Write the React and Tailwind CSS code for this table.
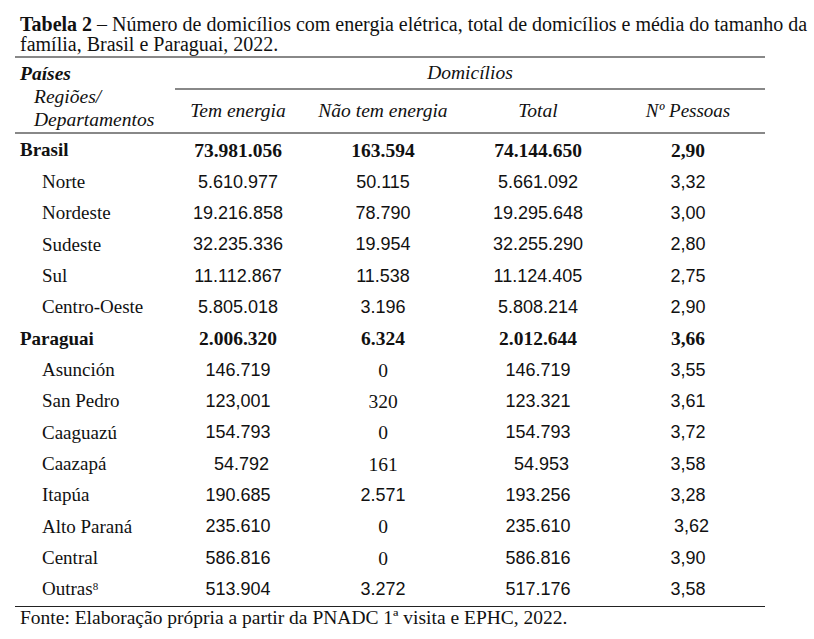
import React from 'react';

const serif = "font-['Liberation_Serif',serif]";
const sans = "font-['Liberation_Sans',Arial,sans-serif]";

// serifCols: cells set in serif; nudge: cells shifted a little right
const rows = [
  { name: 'Brasil', bold: true, cells: ['73.981.056', '163.594', '74.144.650', '2,90'] },
  { name: 'Norte', cells: ['5.610.977', '50.115', '5.661.092', '3,32'] },
  { name: 'Nordeste', cells: ['19.216.858', '78.790', '19.295.648', '3,00'] },
  { name: 'Sudeste', cells: ['32.235.336', '19.954', '32.255.290', '2,80'] },
  { name: 'Sul', cells: ['11.112.867', '11.538', '11.124.405', '2,75'] },
  { name: 'Centro-Oeste', cells: ['5.805.018', '3.196', '5.808.214', '2,90'] },
  { name: 'Paraguai', bold: true, cells: ['2.006.320', '6.324', '2.012.644', '3,66'] },
  { name: 'Asunción', cells: ['146.719', '0', '146.719', '3,55'], serifCols: [1] },
  { name: 'San Pedro', cells: ['123,001', '320', '123.321', '3,61'], serifCols: [1] },
  { name: 'Caaguazú', cells: ['154.793', '0', '154.793', '3,72'], serifCols: [1] },
  { name: 'Caazapá', cells: ['54.792', '161', '54.953', '3,58'], serifCols: [1], nudge: [0, 2] },
  { name: 'Itapúa', cells: ['190.685', '2.571', '193.256', '3,28'] },
  { name: 'Alto Paraná', cells: ['235.610', '0', '235.610', '3,62'], serifCols: [1], nudge: [3] },
  { name: 'Central', cells: ['586.816', '0', '586.816', '3,90'], serifCols: [1] },
  { name: 'Outras', sup: '8', cells: ['513.904', '3.272', '517.176', '3,58'] },
];

const colW = ['w-[126px]', 'w-[164px]', 'w-[146px]', 'w-[154px]'];

function Row({ row }) {
  return (
    <div className="flex h-[31.36px] items-center">
      <div
        className={`w-[160px] ${serif} text-[19px] ${row.bold ? 'font-bold pl-[5px]' : 'pl-[27px]'}`}
      >
        {row.name}
        {row.sup && <sup className="text-[11px]">{row.sup}</sup>}
      </div>
      {row.cells.map((c, i) => {
        const isSerif = row.bold || (row.serifCols && row.serifCols.includes(i));
        const nudge = row.nudge && row.nudge.includes(i);
        return (
          <div
            key={i}
            className={`${colW[i]} text-center ${
              isSerif ? `${serif} text-[19.5px]` : `${sans} text-[18px]`
            } ${row.bold ? 'font-bold' : ''} ${nudge ? 'pl-[7px]' : ''}`}
          >
            {c}
          </div>
        );
      })}
    </div>
  );
}

export default function App() {
  return (
    <div className="w-[814px] h-[639px] bg-white text-[#111] overflow-hidden">
      <div className={`pt-[14px] pl-[20px] pr-[6px] ${serif} text-[20px] leading-[20px]`}>
        <span className="font-bold">Tabela 2</span> – Número de domicílios com energia elétrica, total de
        domicílios e média do tamanho da família, Brasil e Paraguai, 2022.
      </div>

      <div className="ml-[15px] w-[750px] mt-[2px]">
        {/* header */}
        <div className="flex border-t-2 border-b-2 border-[#888]">
          <div className={`w-[160px] ${serif} italic text-[19.5px]`}>
            <div className="h-[32px] flex items-center pl-[5px] font-bold">Países</div>
            <div className="pl-[19px] leading-[23px] -mt-[5px]">Regiões/</div>
            <div className="pl-[19px] leading-[23px]">Departamentos</div>
          </div>
          <div className="flex-1 flex flex-col">
            <div className={`h-[32px] flex items-center justify-center border-b-2 border-[#888] ${serif} italic text-[19.5px]`}>
              Domicílios
            </div>
            <div className={`flex h-[42px] items-center ${serif} italic text-[19.5px]`}>
              <div className={`${colW[0]} text-center`}>Tem energia</div>
              <div className={`${colW[1]} text-center`}>Não tem energia</div>
              <div className={`${colW[2]} text-center`}>Total</div>
              <div className={`${colW[3]} text-center text-[19px]`}>Nº Pessoas</div>
            </div>
          </div>
        </div>

        {/* body */}
        <div className="border-b border-[#222] pt-[1px] pb-[1px]">
          {rows.map((r) => (
            <Row key={r.name} row={r} />
          ))}
        </div>
      </div>

      <div className={`pl-[20px] ${serif} text-[19.5px] leading-[22px]`}>
        Fonte: Elaboração própria a partir da PNADC 1ª visita e EPHC, 2022.
      </div>
    </div>
  );
}
